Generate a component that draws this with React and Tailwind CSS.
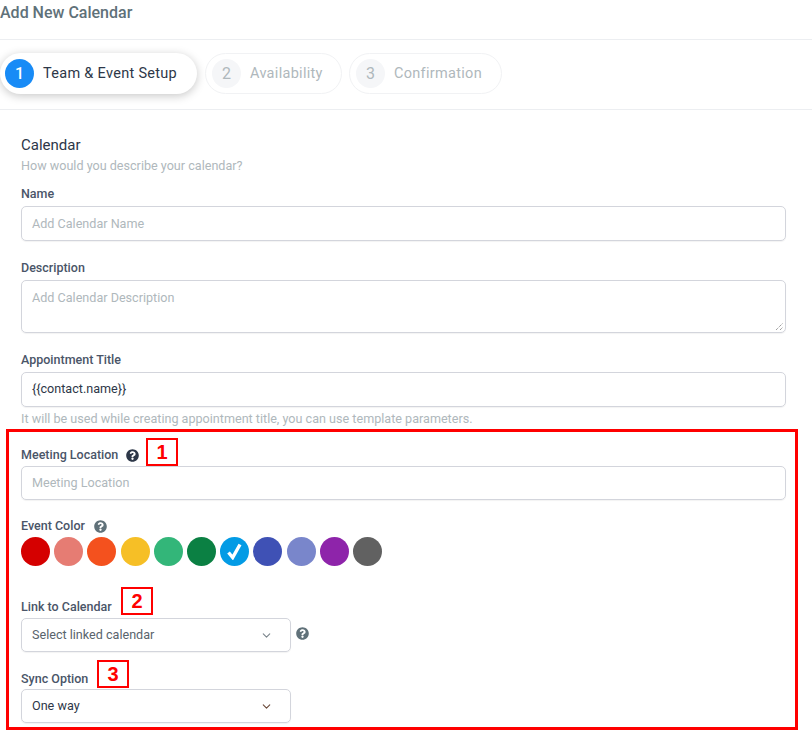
import React from "react";
import { FaQuestionCircle } from "react-icons/fa";
import { FiChevronDown } from "react-icons/fi";

const colors = ["#d50000", "#e67c73", "#f4511e", "#f6bf26", "#33b679", "#0b8043", "#039be5", "#3f51b5", "#7986cb", "#8e24aa", "#616161"];

function Step({ n, label, active, width }) {
  return (
    <div
      className={
        "h-[41px] rounded-full flex items-center bg-white " +
        width +
        (active ? " shadow-[0_2px_10px_rgba(0,0,0,0.22)]" : " border border-[#f1f2f4]")
      }
    >
      <div
        className={
          "w-[29px] h-[29px] rounded-full flex items-center justify-center text-[16px] shrink-0 " +
          (active ? "ml-[5px] bg-[#188bf6] text-white font-medium" : "ml-[6px] bg-[#f5f6f8] text-[#afb8bc]")
        }
      >
        {n}
      </div>
      <span className={"text-[14.5px] tracking-[0.3px] ml-[9px] " + (active ? "text-[#2d3748]" : "text-[#afb8bc]")}>{label}</span>
    </div>
  );
}

function Label({ children, className = "" }) {
  return <div className={"text-[12.5px] leading-[16px] font-medium text-[#4a5568] " + className}>{children}</div>;
}

function Input({ placeholder, value, className = "" }) {
  return (
    <div
      className={
        "rounded-[5px] border border-[#d3d5dc] shadow-[0_1px_1px_rgba(0,0,0,0.05)] px-[10px] flex items-center text-[12.6px] " +
        (value ? "text-[#2d3748] " : "text-[#afb8bc] ") +
        className
      }
    >
      {value || placeholder}
    </div>
  );
}

function Select({ text, dark }) {
  return (
    <div className="w-[270px] h-[34px] rounded-[5px] border border-[#d3d5dc] shadow-[0_1px_1px_rgba(0,0,0,0.05)] pl-[10px] pr-[17px] flex items-center justify-between text-[12.6px] text-[#4a5568]">
      <span className={dark ? "text-[#2d3748]" : "text-[#59646c]"}>{text}</span>
      <FiChevronDown className={dark ? "text-[#6b4a3a]" : "text-[#7b858c]"} size={13} />
    </div>
  );
}

function Badge({ n, className }) {
  return (
    <div
      className={
        "absolute w-[32px] h-[28px] border-[2px] border-[#ff0000] bg-white flex items-center justify-center text-[20px] font-bold text-[#ff0000] leading-none " +
        className
      }
      style={{ fontFamily: "'Liberation Sans', sans-serif" }}
    >
      {n}
    </div>
  );
}

export default function App() {
  return (
    <div className="w-[812px] h-[739px] bg-white overflow-hidden" style={{ fontFamily: "Roboto, sans-serif" }}>
      <div className="h-[40px] border-b border-[#eceef1] pt-[1px]">
        <div className="text-[16px] leading-[24px] font-medium text-[#607179]">Add New Calendar</div>
      </div>
      <div className="h-[70px] border-b border-[#eceef1] pt-[13px] flex gap-[7px] items-start">
        <div className="mr-[1px]">
          <Step n="1" label="Team & Event Setup" active width="w-[197px]" />
        </div>
        <Step n="2" label="Availability" width="w-[137px]" />
        <Step n="3" label="Confirmation" width="w-[153px]" />
      </div>
      <div className="pl-[21px] pr-[26px] pt-[25px]">
        <div className="text-[15px] leading-[20px] text-[#2d3748]">Calendar</div>
        <div className="text-[12.6px] leading-[16px] mt-[3px] text-[#afb8bc]">How would you describe your calendar?</div>
        <Label className="mt-[12px]">Name</Label>
        <Input placeholder="Add Calendar Name" className="mt-[4px] h-[35px] pt-[1px]" />
        <Label className="mt-[19px]">Description</Label>
        <div className="mt-[4px] h-[53px] rounded-[5px] border border-[#d3d5dc] shadow-[0_1px_1px_rgba(0,0,0,0.05)] px-[10px] pt-[8px] text-[12.6px] text-[#afb8bc] relative">
          Add Calendar Description
          <svg className="absolute right-[1px] bottom-[1px]" width="9" height="9" viewBox="0 0 9 9">
            <path d="M1 8L8 1M5 8L8 5" stroke="#777" strokeWidth="1" strokeDasharray="1 1" fill="none" />
          </svg>
        </div>
        <Label className="mt-[19px]">Appointment Title</Label>
        <Input value="{{contact.name}}" className="mt-[4px] h-[35px]" />
        <div className="text-[12.6px] leading-[16px] mt-[4px] text-[#afb8bc]">It will be used while creating appointment title, you can use template parameters.</div>
      </div>
      <div className="relative ml-[6px] mt-[2px] w-[792px] h-[301px] border-[3px] border-[#ff0000] pl-[12px] pr-[9px] pt-[15px]">
        <div className="flex items-center">
          <Label>Meeting Location</Label>
          <FaQuestionCircle className="ml-[8px] text-[#2d3748]" size={13} />
        </div>
        <Input placeholder="Meeting Location" className="mt-[3px] h-[34px] w-[765px]" />
        <div className="flex items-center mt-[18px]">
          <Label>Event Color</Label>
          <FaQuestionCircle className="ml-[9px] text-[#607179]" size={13} />
        </div>
        <div className="flex gap-[4.2px] mt-[3px]">
          {colors.map((c, i) => (
            <div key={c} className="w-[29px] h-[29px] rounded-full flex items-center justify-center" style={{ backgroundColor: c }}>
              {i === 6 && (
                <svg width="17" height="17" viewBox="0 0 17 17">
                  <path d="M2.5 9.5L6.7 14.5L14 1.5" stroke="#fff" strokeWidth="3.4" fill="none" />
                </svg>
              )}
            </div>
          ))}
        </div>
        <Label className="mt-[33px]">Link to Calendar</Label>
        <div className="flex items-center mt-[3px]">
          <Select text="Select linked calendar" />
          <FaQuestionCircle className="ml-[5px] -mt-[4px] text-[#607179]" size={13} />
        </div>
        <Label className="mt-[19px]">Sync Option</Label>
        <div className="mt-[2px]">
          <Select text="One way" dark />
        </div>
        <Badge n="1" className="left-[137px] top-[6px]" />
        <Badge n="2" className="left-[112px] top-[155px]" />
        <Badge n="3" className="left-[88px] top-[228px]" />
      </div>
    </div>
  );
}
